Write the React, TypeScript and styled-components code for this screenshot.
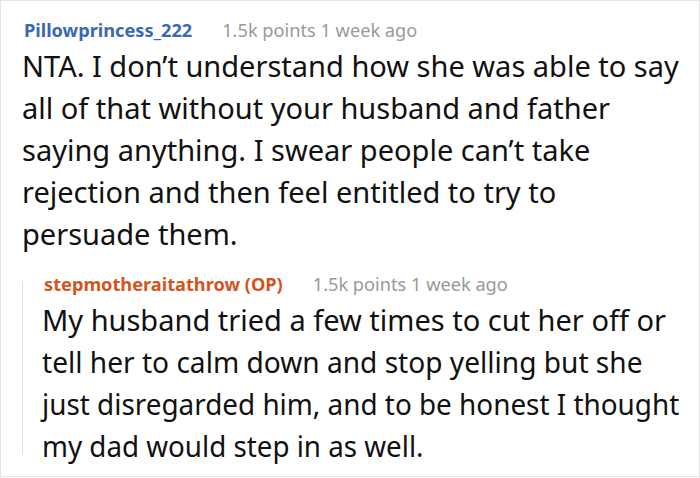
import styled, { createGlobalStyle } from 'styled-components';
import type { ReactNode } from 'react';

const GlobalStyle = createGlobalStyle`
  html, body {
    margin: 0;
    padding: 0;
    background: #fff;
  }
  * {
    box-sizing: border-box;
  }
`;

const Card = styled.div`
  width: 700px;
  height: 477px;
  border: 1px solid #e4e4e4;
  padding: 14px 12px 0 21px;
  font-family: 'Noto Sans', 'Open Sans', sans-serif;
  background: #fff;
  overflow: hidden;
`;

const Header = styled.div`
  display: flex;
  align-items: baseline;
  gap: 30px;
  line-height: 30px;
  padding-left: 2px;
`;

const Author = styled.span<{ $op?: boolean }>`
  font-size: 18.2px;
  font-weight: 700;
  color: ${(p) => (p.$op ? '#d35420' : '#3a68b4')};
`;

const Meta = styled.span`
  font-size: 18.2px;
  color: #999;
`;

const Body = styled.p`
  margin: 0;
  font-size: 29px;
  line-height: 42px;
  color: #111;
`;

// the reply's lines are drawn a little narrower in the screenshot
const Line = styled.span<{ $scale: number }>`
  display: block;
  white-space: nowrap;
  transform: scaleX(${(p) => p.$scale});
  transform-origin: left center;
`;

const Reply = styled.div`
  display: flex;
  margin-top: 14px;
`;

const Rail = styled.div`
  width: 1px;
  flex-shrink: 0;
  background: #e0e0e0;
  margin: 12px 0 13px 0;
`;

const ReplyContent = styled.div`
  padding-left: 19px;
`;

interface CommentProps {
  author: string;
  op?: boolean;
  points: string;
  time: string;
  children: ReactNode;
}

const Comment = ({ author, op, points, time, children }: CommentProps) => (
  <div>
    <Header>
      <Author $op={op}>{op ? `${author} (OP)` : author}</Author>
      <Meta>
        {points} points {time}
      </Meta>
    </Header>
    <Body>{children}</Body>
  </div>
);

const replyLines: [string, number][] = [
  ['My husband tried a few times to cut her off or', 1],
  ['tell her to calm down and stop yelling but she', 0.969],
  ['just disregarded him, and to be honest I thought', 0.961],
  ['my dad would step in as well.', 0.957],
];

export default function App() {
  return (
    <>
      <GlobalStyle />
      <Card>
        <Comment author="Pillowprincess_222" points="1.5k" time="1 week ago">
          NTA. I don’t understand how she was able to say all of that without your husband and
          father saying anything. I swear people can’t take rejection and then feel entitled to try
          to persuade them.
        </Comment>
        <Reply>
          <Rail />
          <ReplyContent>
            <Comment author="stepmotheraitathrow" op points="1.5k" time="1 week ago">
              {replyLines.map(([text, scale]) => (
                <Line key={text} $scale={scale}>
                  {text}
                </Line>
              ))}
            </Comment>
          </ReplyContent>
        </Reply>
      </Card>
    </>
  );
}
